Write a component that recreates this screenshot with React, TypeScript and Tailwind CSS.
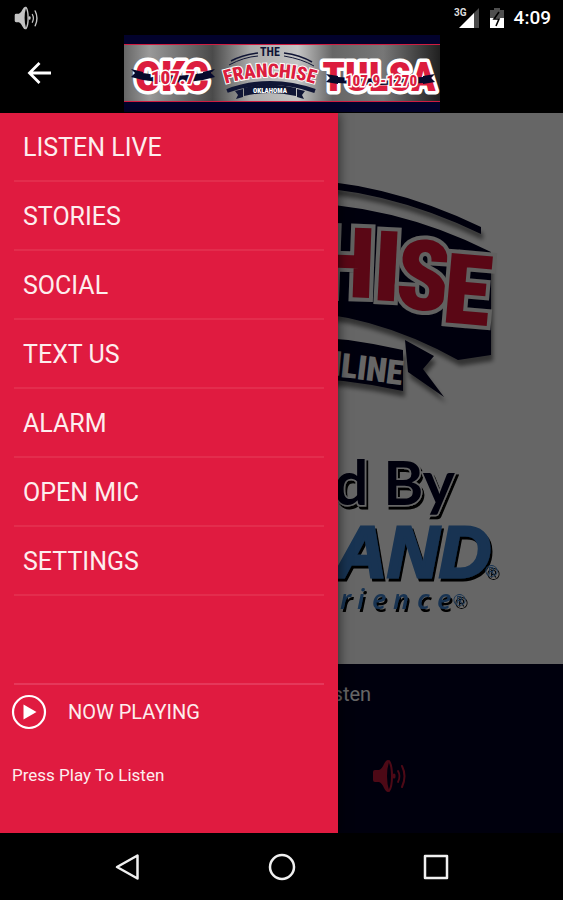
const MENU: string[] = [
  "LISTEN LIVE",
  "STORIES",
  "SOCIAL",
  "TEXT US",
  "ALARM",
  "OPEN MIC",
  "SETTINGS",
];

function SpeakerIcon({ className }: { className?: string }) {
  return (
    <svg viewBox="0 0 34 34" className={className} aria-hidden="true">
      <path
        fill="currentColor"
        d="M1 13q0-2 2-2h4q3-1 5-6 2-4 4-4 1 0 1 2-2 6-2 14t2 14q0 2-1 2-2 0-4-4-2-5-5-6H3q-2 0-2-2z"
      />
      <g fill="none" stroke="currentColor" strokeLinecap="round">
        <path strokeWidth="2" d="M17 2q3 4 3 15t-3 15" />
        <path strokeWidth="3" d="M22 16v2" />
        <path strokeWidth="1.8" d="M26 12q3 5 0 11" />
        <path strokeWidth="2" d="M30 7q5 10 0 21" />
      </g>
    </svg>
  );
}

function StatusBar() {
  return (
    <div className="flex h-[35px] items-center justify-between pl-[14px] pr-3">
      <SpeakerIcon className="size-6 text-[#c4c4c4]" />
      <div className="flex items-center gap-[10px]">
        <svg viewBox="0 0 26 22" className="h-[22px] w-[26px]" aria-hidden="true">
          <path fill="#4a4a4a" d="M25 1v20h-6V7z" />
          <path fill="#fff" d="M20 6v15H5z" />
          <text x="0" y="9" fontSize="10" fontWeight="700" fill="#ddd" fontFamily="Roboto, sans-serif">
            3G
          </text>
        </svg>
        <svg viewBox="0 0 14 22" className="h-[22px] w-[14px]" aria-hidden="true">
          <path fill="#4f4f4f" d="M4 1h6v2h4v18H0V3h4z" />
          <path fill="#fff" d="M0 11h14v10H0z" />
          <path fill="none" stroke="#000" strokeWidth="1.6" d="M9 5l-5 7h5l-3 7" />
        </svg>
        <span className="text-[19px] font-medium leading-6">4:09</span>
      </div>
    </div>
  );
}

function HeaderLogo() {
  return (
    <svg
      viewBox="0 0 316 77"
      className="h-[77px] w-[316px] shrink-0"
      role="img"
      aria-label="The Franchise"
      fontFamily="'Roboto Condensed', 'Liberation Sans Narrow', sans-serif"
      fontWeight="900"
      textAnchor="middle"
    >
      <defs>
        <linearGradient id="metal">
          <stop offset="0" stopColor="#666" />
          <stop offset="0.08" stopColor="#999" />
          <stop offset="0.28" stopColor="#4a4a4a" />
          <stop offset="0.4" stopColor="#aaa" />
          <stop offset="0.55" stopColor="#c4c4c4" />
          <stop offset="0.66" stopColor="#666" />
          <stop offset="0.82" stopColor="#777" />
          <stop offset="1" stopColor="#202020" />
        </linearGradient>
        <path id="arch" d="M98 50Q146 34 194 50" />
      </defs>
      <path fill="#02022c" d="M0 0h316v77H0z" />
      <path fill="url(#metal)" d="M0 9h316v57H0z" />
      <path stroke="#d01c40" d="M0 9.500h316M0 66.500h316" />

      <g
        fill="#dc1d3e"
        stroke="#fff"
        strokeWidth="7"
        strokeLinejoin="round"
        fontSize="43"
        paintOrder="stroke"
      >
        <text x="48" y="56">
          OKC
        </text>
        <text x="255" y="56" fontSize="41">
          TULSA
        </text>
      </g>
      <g fill="#070a2c">
        <path d="M7 34l12 3v8l-12-3 4-4zM91 34l-12 3v8l12-3-4-4zM19 38q30 6 60 0v7q-30 5-60 0z" />
        <path d="M202 39l12 2v8l-12-2 4-4zM311 39l-12 2v8l12-2-4-4zM214 42q42 3 85 0v6q-42 4-85 0z" />
      </g>
      <g fill="#dc1d3e" stroke="#fff" strokeWidth="3" paintOrder="stroke">
        <text x="49" y="49" fontSize="19">
          107.7
        </text>
        <text x="257" y="51" fontSize="15">
          107.9-1270
        </text>
      </g>

      <g fill="none" stroke="#101535">
        <path strokeWidth="1.500" d="M107 26Q118 20 134 18M160 18Q176 20 188 27" />
        <path strokeWidth="1" d="M105 30Q120 22 134 21M160 21Q178 24 190 31" />
        <path strokeWidth="4" d="M103 56Q146 40 191 56" />
      </g>
      <text x="146" y="21" fontSize="12" fontWeight="700" fill="#101535">
        THE
      </text>
      <text fontSize="19" fill="#dc1d3e" stroke="#fff" strokeWidth="2" paintOrder="stroke">
        <textPath href="#arch" startOffset="50%">
          FRANCHISE
        </textPath>
      </text>
      <path fill="#101535" d="M120 53q26-7 52 0v8q-26-6-52 0zM111 56l8-2v8l-7 2 2-4zM181 56l-8-2v8l7 2-2-4z" />
      <text x="146" y="58" fontSize="7" fill="#fff">
        OKLAHOMA
      </text>
    </svg>
  );
}

function Artwork() {
  return (
    <svg viewBox="0 113 563 551" className="block w-full bg-white" role="img" aria-label="The Franchise Online">
      <defs>
        <filter id="drop" x="-10%" y="-10%" width="120%" height="130%">
          <feDropShadow dx="2" dy="6" stdDeviation="2" floodOpacity="0.5" />
        </filter>
        <filter id="edge" x="-10%" y="-10%" width="120%" height="130%">
          <feDropShadow dx="2" dy="3" stdDeviation="0" floodColor="#000" />
        </filter>
      </defs>
      <g fill="#000020" filter="url(#drop)">
        <path d="M81 227Q180 179 281 179T481 227v7Q382 186 281 186T81 234z" />
        <path d="M72 252Q170 202 281 202T491 252V355L458 360Q370 311 281 311T104 360L72 355z" />
        <path d="M160 350Q281 322 403 350V391Q281 364 160 391z" />
        <path d="M405 340l29 16-11 13 21 28-36-25z" />
      </g>
      <g
        fontFamily="'Roboto Condensed', 'Liberation Sans Narrow', sans-serif"
        fontWeight="900"
        strokeLinejoin="miter"
        paintOrder="stroke"
      >
        <text
          x="70 112 160 208 256 314 372 394 441"
          y="330 318 306 299 296 296 300 308 322"
          rotate="-5 -4 -3 -2 0 2 3 4 5"
          fontSize="98"
          fill="#e21336"
          stroke="#f2f2ef"
          strokeWidth="8"
        >
          FRANCHISE
        </text>
        <text
          x="298 320 340 356 365 385"
          y="372 374 377 379 380 383"
          rotate="4 5 6 7 7 7"
          fontSize="34"
          fill="#fff"
        >
          ONLINE
        </text>
      </g>
      <text
        x="455"
        y="505"
        fontSize="61"
        fontWeight="700"
        fontFamily="Lato, sans-serif"
        textAnchor="end"
        fill="#000020"
        stroke="#fff"
        strokeWidth="3"
        paintOrder="stroke"
        filter="url(#edge)"
      >
        Powered By
      </text>
      <g fill="#3c80cc" filter="url(#edge)" fontStyle="italic" fontFamily="'Liberation Sans', sans-serif">
        <text
          x="491"
          y="577"
          fontSize="72"
          fontWeight="700"
          textAnchor="end"
          stroke="#3c80cc"
          strokeWidth="3"
        >
          LAND
        </text>
        <text x="485" y="577" fontSize="17">
          ®
        </text>
        <text
          x="264 284 303 321 340 357 372 393 417 437"
          y="609"
          fontSize="27"
          fontWeight="600"
          fontFamily="'Open Sans', sans-serif"
        >
          Experience
        </text>
        <text x="453" y="606" fontSize="17">
          ®
        </text>
      </g>
    </svg>
  );
}

function Drawer() {
  return (
    <aside className="absolute inset-y-0 left-0 flex w-3/5 flex-col bg-[#e01b40] px-[14px] shadow-[2px_0_10px_rgba(0,0,0,0.5)]">
      <nav>
        <ul>
          {MENU.map((item) => (
            <li key={item} className="border-b-2 border-[#e32d4d]">
              <a href="#" className="flex h-[67px] items-center pl-[9px] pt-[2px] text-[25px] leading-8 text-[#fdeeee]">
                {item}
              </a>
            </li>
          ))}
        </ul>
      </nav>
      <section className="mt-auto h-[150px] border-t-2 border-[#e5385a]">
        <div className="-ml-[3px] flex h-[54px] items-center gap-[21px]">
          <button type="button" aria-label="Play">
            <svg viewBox="0 0 36 36" className="block size-9" aria-hidden="true">
              <circle cx="18" cy="18" r="16" fill="none" stroke="#fff" strokeWidth="2.2" />
              <path fill="#fff" d="M12.500 10.500v15L25.500 18z" />
            </svg>
          </button>
          <h2 className="text-[20px] leading-6 text-[#fdeeee]">NOW PLAYING</h2>
        </div>
        <p className="-ml-[2px] mt-6 text-[17px] leading-6 text-[#fdeeee]">Press Play To Listen</p>
      </section>
    </aside>
  );
}

function SystemNav() {
  return (
    <footer className="flex h-[67px] items-center justify-center gap-[126px]">
      <button type="button" aria-label="Back">
        <svg viewBox="0 0 28 28" className="block size-7" fill="none" stroke="#f0f0f0" strokeWidth="2.500" strokeLinejoin="round">
          <path d="M3 14L23.500 2.500v23z" />
        </svg>
      </button>
      <button type="button" aria-label="Home">
        <svg viewBox="0 0 28 28" className="block size-7" fill="none" stroke="#f0f0f0" strokeWidth="2.500">
          <circle cx="14" cy="14" r="12" />
        </svg>
      </button>
      <button type="button" aria-label="Recent apps">
        <svg viewBox="0 0 28 28" className="block size-7" fill="none" stroke="#f0f0f0" strokeWidth="2.500" strokeLinejoin="round">
          <path d="M3 3h22v22H3z" />
        </svg>
      </button>
    </footer>
  );
}

export default function App() {
  return (
    <div className="flex min-h-screen flex-col bg-black font-[Roboto,sans-serif] text-white">
      <StatusBar />
      <header className="grid h-[78px] grid-cols-[1fr_auto_1fr] items-start">
        <button type="button" aria-label="Close menu" className="mt-6 ml-[26px] w-7">
          <svg
            viewBox="0 0 28 28"
            className="block size-7"
            fill="none"
            stroke="#fff"
            strokeWidth="2.800"
          >
            <path d="M25 14H4M13.500 4L3.500 14l10 10" />
          </svg>
        </button>
        <HeaderLogo />
      </header>

      <main className="relative flex flex-1 flex-col">
        <Artwork />
        <section className="flex-1 bg-[#000022] text-center">
          <p className="pt-[18px] text-[20px] leading-6">Press Play To Listen</p>
          <div className="ml-[66%] mt-[53px] flex">
            <button type="button" aria-label="Volume" className="text-[#c01838]">
              <SpeakerIcon className="block size-[34px]" />
            </button>
          </div>
        </section>
        {/* scrim */}
        <div className="absolute inset-0 bg-black/60" />
        <Drawer />
      </main>

      <SystemNav />
    </div>
  );
}
